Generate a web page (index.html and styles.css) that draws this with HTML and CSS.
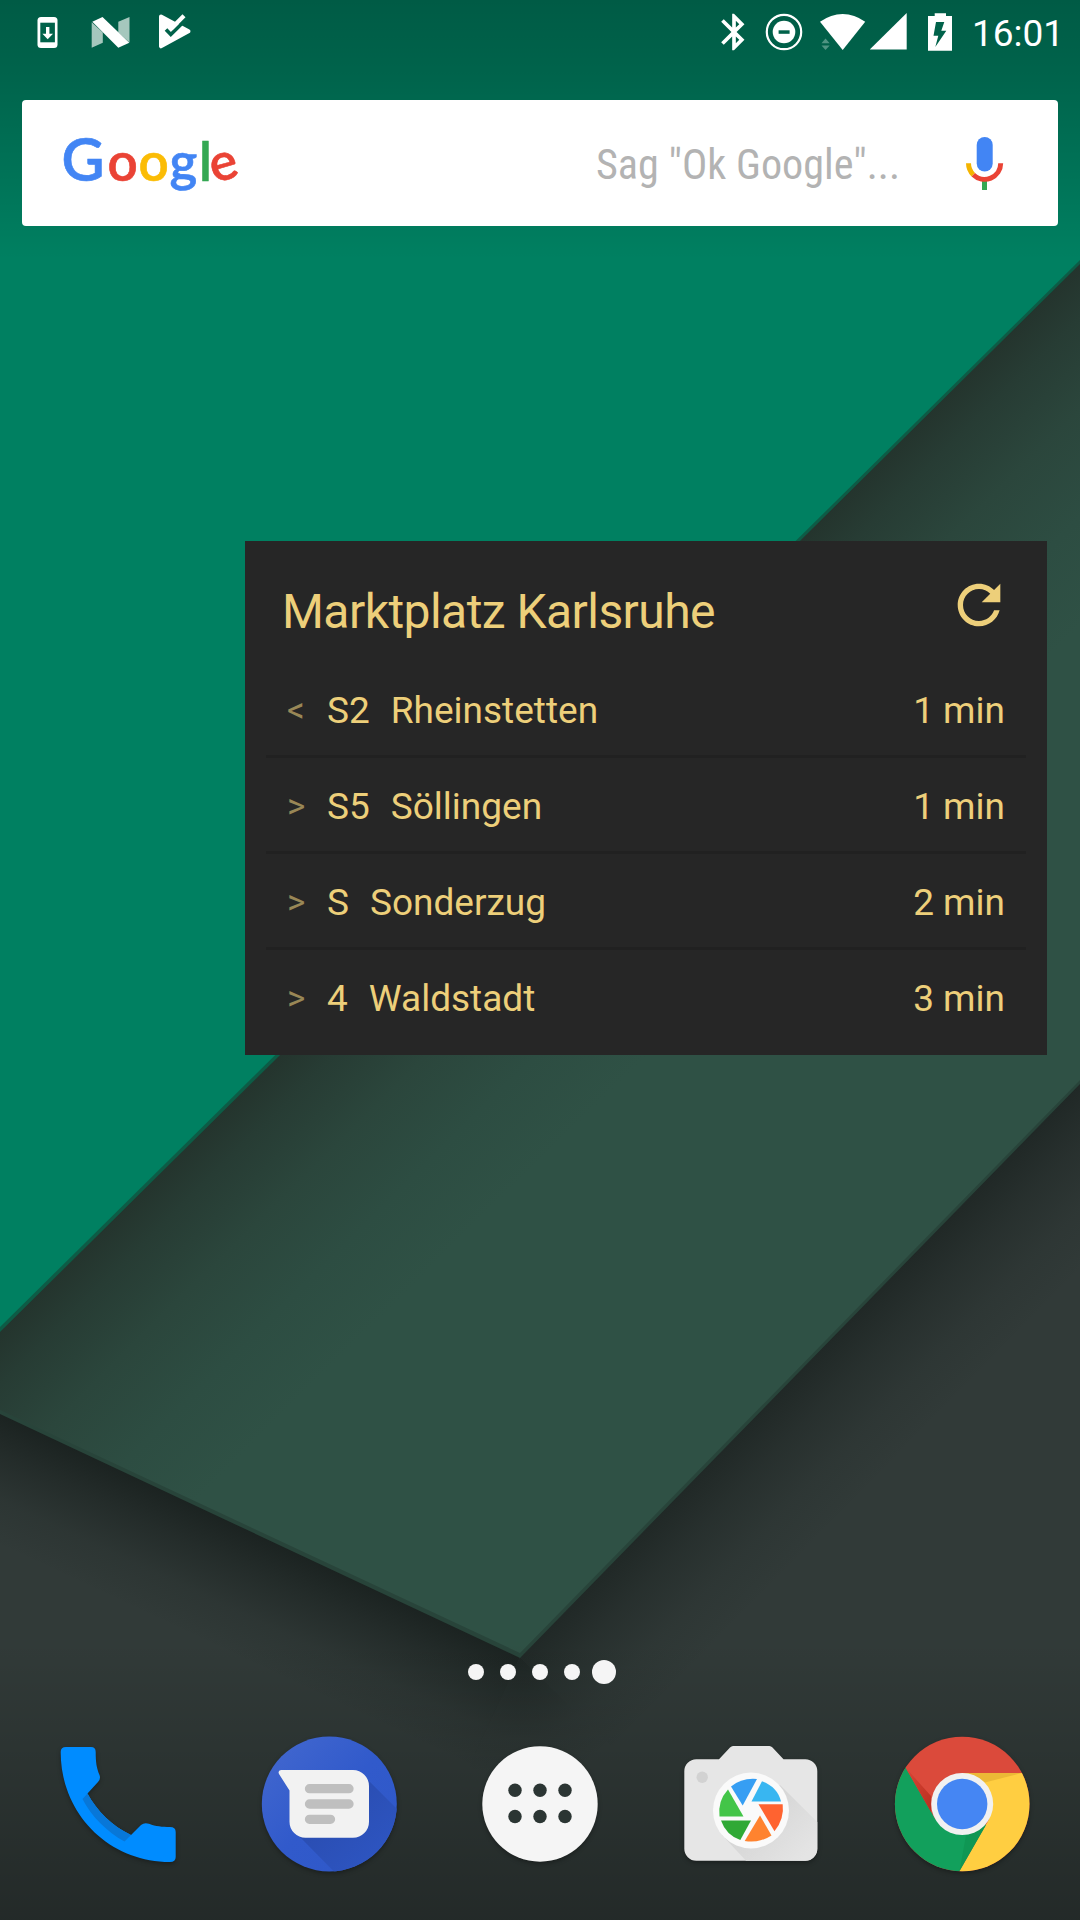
FILE: index.html
```html
<!DOCTYPE html>
<html lang="de">
<head>
<meta charset="utf-8">
<title>Startbildschirm</title>
<link rel="stylesheet" href="styles.css">
</head>
<body>
<svg class="wallpaper" viewBox="0 0 1080 1920" aria-hidden="true">
  <defs>
    <linearGradient id="sheet" gradientUnits="userSpaceOnUse" x1="0" y1="1331" x2="182" y2="1515">
      <stop offset="0" stop-color="#24342d"/><stop offset=".15" stop-color="#273c34"/><stop offset=".4" stop-color="#2b463c"/><stop offset=".7" stop-color="#2d4d42"/><stop offset="1" stop-color="#2f5145"/>
    </linearGradient>
    <linearGradient id="dim" x1="0" y1="0" x2="0" y2="1">
      <stop offset="0" stop-color="#000" stop-opacity=".29"/><stop offset=".3" stop-color="#000" stop-opacity=".22"/><stop offset="1" stop-color="#000" stop-opacity="0"/>
    </linearGradient>
    <linearGradient id="floor" x1="0" y1="0" x2="0" y2="1">
      <stop offset="0" stop-color="#000" stop-opacity="0"/><stop offset="1" stop-color="#000" stop-opacity=".28"/>
    </linearGradient>
    <linearGradient id="shadeLeft" gradientUnits="userSpaceOnUse" x1="520" y1="1657" x2="469" y2="1766">
      <stop offset="0" stop-color="#101715" stop-opacity=".66"/><stop offset=".3" stop-color="#101715" stop-opacity=".4"/><stop offset=".65" stop-color="#101715" stop-opacity=".13"/><stop offset="1" stop-color="#101715" stop-opacity="0"/>
    </linearGradient>
    <linearGradient id="shadeRight" gradientUnits="userSpaceOnUse" x1="520" y1="1657" x2="614" y2="1749">
      <stop offset="0" stop-color="#101715" stop-opacity=".5"/><stop offset=".3" stop-color="#101715" stop-opacity=".29"/><stop offset=".65" stop-color="#101715" stop-opacity=".1"/><stop offset="1" stop-color="#101715" stop-opacity="0"/>
    </linearGradient>
    <radialGradient id="shadeTip" gradientUnits="userSpaceOnUse" cx="520" cy="1657" r="125">
      <stop offset="0" stop-color="#101715" stop-opacity=".58"/><stop offset=".3" stop-color="#101715" stop-opacity=".35"/><stop offset=".65" stop-color="#101715" stop-opacity=".11"/><stop offset="1" stop-color="#101715" stop-opacity="0"/>
    </radialGradient>
  </defs>
  <rect width="1080" height="1920" fill="#313a38"/>
  <path d="M0 1413L520 1657L465 1775L0 1557z" fill="url(#shadeLeft)"/>
  <path d="M520 1657L467 1770L520 1800L618 1753z" fill="url(#shadeTip)"/>
  <path d="M520 1657L1080 1083V1286L618 1753z" fill="url(#shadeRight)"/>
  <path d="M0 1410V1414L520 1658L1080 1084V1079z" fill="#28443a"/>
  <path d="M0 1410L520 1653L1080 1080V200L0 1270z" fill="url(#sheet)"/>
  <path d="M0 0H1080V264L0 1332z" fill="#0d5c46"/>
  <path d="M0 0H1080V260L0 1327z" fill="#008061"/>
  <rect width="1080" height="260" fill="url(#dim)"/>
  <rect y="1640" width="1080" height="280" fill="url(#floor)"/>
</svg>

<div class="home">
  <header class="status">
    <svg class="s-update" width="22" height="33" viewBox="37 15 22 33"><rect x="37.5" y="16" width="20" height="31" rx="3.5" fill="#fff"/><rect x="40.3" y="21.7" width="14.6" height="19.6" fill="#00624a"/><path d="M46 26h3.400v6.700h3.600L47.700 38.200L42.400 32.700H46z" fill="#fff"/></svg>
    <svg class="s-n" width="40" height="33" viewBox="91 15 40 33"><path d="M91.700 21.300V46.700L102.800 41.700V31.500zM118.300 20.700L129.500 16V41.500L118.300 31.500z" fill="#a5c7bd"/><path d="M92.300 20.700L102.500 16L129.300 41.700L118.300 46.700z" fill="#fff"/></svg>
    <svg class="s-play" width="34" height="36" viewBox="158 14 34 36"><path d="M161 16.500L188.500 31.300L161 46.300z" fill="#fff" stroke="#fff" stroke-width="4" stroke-linejoin="round"/><path d="M166 29.500L170.800 34.500L187 18.500" fill="none" stroke="#00624a" stroke-width="3.600"/><path d="M171 28.800L184 15.800" stroke="#fff" stroke-width="4.200"/></svg>
    <span class="spacer"></span>
    <svg class="s-bt" width="44" height="44" viewBox="0 0 24 24"><path fill="#fff" d="M17.710 7.710L12 2h-1v7.590L6.410 5 5 6.410 10.590 12 5 17.590 6.410 19 11 14.410V22h1l5.710-5.710-4.300-4.290 4.300-4.290zM13 5.830l1.880 1.880L13 9.590V5.830zm1.880 10.460L13 18.170v-3.760l1.880 1.880z"/></svg>
    <svg class="s-dnd" width="38" height="38" viewBox="765 13 38 38"><circle cx="784" cy="32" r="17.200" fill="none" stroke="#fff" stroke-width="2.200"/><circle cx="784" cy="32" r="11.300" fill="#fff"/><rect x="778.600" y="30.300" width="11" height="3.500" fill="#00624a"/></svg>
    <svg class="s-wifi" width="46" height="38" viewBox="820 13 46 38"><path d="M820 21.700Q831 13.900 842.700 13.900T865.200 21.700L842.700 50z" fill="#fff"/><path d="M821.500 43.300L825.500 38.500L829.700 43.300zM821.500 45.500H829.700L825.500 50z" fill="#4f9482"/></svg>
    <svg class="s-cell" width="38" height="38" viewBox="870 13 38 38"><path d="M869.700 49.500L906.700 13V49.500z" fill="#fff"/></svg>
    <svg class="s-bat" width="25" height="39" viewBox="928 12 25 39"><path d="M934.700 12.300H946V15H952V49.800H928V15H934.700z" fill="#fff"/><path d="M936 21H944.300L941.300 29.800H946.300L935.300 46L938.300 34.700H933.500z" fill="#00624a"/></svg>
    <span class="clock">16:01</span>
  </header>

  <section class="search">
    <svg class="logo" width="190" height="96" viewBox="50 112 190 96"><g font-family="Lato, sans-serif" font-weight="600" stroke-width=".6"><text y="179.500" font-size="59"><tspan x="61.500" fill="#4285f4" stroke="#4285f4">G</tspan></text><text y="179.500" font-size="53"><tspan x="107.500" fill="#ea4335" stroke="#ea4335">o</tspan><tspan x="138.500" fill="#fbbc05" stroke="#fbbc05">o</tspan><tspan x="169.500" fill="#4285f4" stroke="#4285f4">g</tspan><tspan x="199" fill="#34a853" stroke="#34a853">l</tspan></text><text x="210" y="179" font-size="52" fill="#ea4335" stroke="#ea4335" transform="rotate(-16 224 166)">e</text></g></svg>
    <svg class="hint" width="310" height="60" viewBox="594 135 310 60"><text x="595" y="179.300" textLength="304" lengthAdjust="spacingAndGlyphs">Sag "Ok Google"...</text></svg>
    <svg class="mic" width="40" height="56" viewBox="965 136 40 56"><rect x="976.700" y="137" width="16" height="34.500" rx="8" fill="#4285f4"/><rect x="982" y="181" width="5" height="9" fill="#34a853"/><path d="M968.500 163.300A16.100 16.100 0 0 0 973.300 174.700" fill="none" stroke="#f4b400" stroke-width="5"/><path d="M973.300 174.700A16.100 16.100 0 0 0 1000.700 163.300" fill="none" stroke="#ea4335" stroke-width="5"/></svg>
  </section>

  <section class="widget">
    <div class="head">
      <h1>Marktplatz Karlsruhe</h1>
      <svg class="reload" width="64" height="64" viewBox="0 0 24 24"><path fill="#edcf7a" d="M17.650 6.350C16.200 4.900 14.210 4 12 4c-4.420 0-7.990 3.580-7.990 8s3.570 8 7.990 8c3.730 0 6.840-2.550 7.730-6h-2.080c-.82 2.330-3.040 4-5.650 4-3.310 0-6-2.690-6-6s2.690-6 6-6c1.660 0 3.140.69 4.220 1.780L13 11h7V4l-2.350 2.350z"/></svg>
    </div>
    <div class="row"><span class="dir">&lt;</span><span class="line">S2</span><span class="dest">Rheinstetten</span><span class="time">1 min</span></div>
    <div class="row"><span class="dir">&gt;</span><span class="line">S5</span><span class="dest">Söllingen</span><span class="time">1 min</span></div>
    <div class="row"><span class="dir">&gt;</span><span class="line">S</span><span class="dest">Sonderzug</span><span class="time">2 min</span></div>
    <div class="row"><span class="dir">&gt;</span><span class="line">4</span><span class="dest">Waldstadt</span><span class="time">3 min</span></div>
  </section>

  <div class="pages"><i></i><i></i><i></i><i></i><i class="current"></i></div>

  <nav class="dock">
    <svg viewBox="46 1732 144 144"><path d="M66 1747H91Q95.700 1747 95.700 1752C95.700 1762 96.500 1768 99.500 1775Q101 1779 98 1782L87.500 1793.500C97 1811 112 1826 131 1835L141 1825Q144.500 1822 149 1823.800C156 1826.500 162 1827 170 1827Q175.700 1827 175.700 1832V1857Q175.700 1862 170 1862C109 1862 60.700 1814 60.700 1752Q60.700 1747 66 1747z" fill="#008cff"/><path d="M87.500 1793.500L82.500 1799C91 1816 107 1832 124.500 1841.500L131 1835C112 1826 97 1811 87.500 1793.500z" fill="#0877d8"/></svg>
    <svg viewBox="257 1732 144 144">
      <defs><clipPath id="mc"><circle cx="329.300" cy="1804" r="67.500"/></clipPath><linearGradient id="mg" x1="0" y1="0" x2="1" y2="1"><stop offset="0" stop-color="#4469cf"/><stop offset=".5" stop-color="#315acb"/><stop offset="1" stop-color="#2f58c8"/></linearGradient><linearGradient id="ms" gradientUnits="userSpaceOnUse" x1="330" y1="1800" x2="376" y2="1850"><stop offset="0" stop-color="#2a4db1"/><stop offset="1" stop-color="#2d54bf"/></linearGradient></defs>
      <circle cx="329.300" cy="1804" r="67.500" fill="url(#mg)"/>
      <path d="M364 1776L440 1852L400 1900H362L295 1832z" fill="url(#ms)" clip-path="url(#mc)"/>
      <path d="M281 1770H353A16 16 0 0 1 369 1786V1821.700A16 16 0 0 1 353 1837.700H305.500A16 16 0 0 1 289.500 1821.700V1790.500L279 1774Q277.500 1770.500 281 1770z" fill="#f2f2f2"/>
      <path d="M309.500 1788.700H349M309.500 1804H349M309.500 1819.300H330.500" stroke="#bfbfbf" stroke-width="9.300" stroke-linecap="round"/>
    </svg>
    <svg viewBox="468 1732 144 144"><circle cx="540" cy="1804" r="57.700" fill="#f5f5f5"/><g fill="#2b3533"><circle cx="515" cy="1790.300" r="6.700"/><circle cx="540" cy="1790.300" r="6.700"/><circle cx="565" cy="1790.300" r="6.700"/><circle cx="515" cy="1816.500" r="6.700"/><circle cx="540" cy="1816.500" r="6.700"/><circle cx="565" cy="1816.500" r="6.700"/></g></svg>
    <svg viewBox="679 1732 144 144">
      <defs><linearGradient id="ks" gradientUnits="userSpaceOnUse" x1="755" y1="1815" x2="800" y2="1860"><stop offset="0" stop-color="#d6d6d6"/><stop offset="1" stop-color="#e4e4e4"/></linearGradient></defs>
      <path d="M696.300 1759.300H719L730 1747.500Q731.500 1746 733 1746H769.500Q771 1746 772.500 1747.500L783.500 1759.300H805.300A12 12 0 0 1 817.300 1771.300V1848.700A12 12 0 0 1 805.300 1860.700H696.300A12 12 0 0 1 684.300 1848.700V1771.300A12 12 0 0 1 696.300 1759.300z" fill="#e6e6e6"/>
      <path d="M780 1785L817.300 1822V1848.700A12 12 0 0 1 805.300 1860.700H746L722 1835z" fill="url(#ks)"/>
      <circle cx="702.200" cy="1777.300" r="5.700" fill="#d2d2d2"/><circle cx="751" cy="1810.500" r="38" fill="#fafafa"/>
      <path fill="#369ef3" d="M731 1786.500Q742 1777.500 757 1779L742.700 1805.500z"/>
      <path fill="#38b6f1" d="M762 1781.300Q777.500 1787 781 1801.500H751.500z"/>
      <path fill="#ff6330" d="M758.500 1804.300H782.700Q784.500 1819 774.500 1831.300z"/>
      <path fill="#ff832f" d="M760 1815.500L771.500 1835.500Q759 1843.500 744.700 1841z"/>
      <path fill="#30a936" d="M721 1820.500H751L740.300 1840Q726 1835 721 1820.500z"/>
      <path fill="#43c548" d="M728 1789.500L743.500 1816.500H719.500Q717.500 1801 728 1789.500z"/>
    </svg>
    <svg viewBox="890 1732 144 144">
      <defs><clipPath id="cc"><circle cx="962.200" cy="1804" r="67.300"/></clipPath>
      <linearGradient id="cs" x1="0" y1="0" x2="1" y2="1"><stop offset="0" stop-color="#db4437"/><stop offset="1" stop-color="#b8301f"/></linearGradient></defs>
      <g clip-path="url(#cc)"><rect x="890" y="1732" width="144" height="144" fill="#db4a3b"/>
      <path d="M905.500 1767.500L935.500 1819.500L962 1804L986 1825L959 1872L880 1880V1725z" fill="#12a05c"/>
      <path d="M962 1773H1035V1880H954.500L989 1819.500z" fill="#ffce41"/>
      <path d="M962 1773H1022L983 1783z" fill="#ecb936"/>
      <path d="M905.500 1767.500L931 1796V1812z" fill="url(#cs)"/><path d="M986 1825L966 1835L959.500 1871z" fill="#0f9754"/></g>
      <circle cx="962.200" cy="1804" r="31" fill="#f1f1f1"/><circle cx="962.200" cy="1804" r="25.200" fill="#4586f3"/>
    </svg>
  </nav>
</div>
</body>
</html>
```
FILE: styles.css
```css
* { box-sizing: border-box; }
body { margin: 0; background: #313a38; font-family: Roboto, "Noto Sans", sans-serif; }
svg { display: block; flex: none; }

.wallpaper { position: absolute; top: 0; left: 0; width: 1080px; height: 1920px; }
.home { position: relative; width: 1080px; height: 1920px; display: flex; flex-direction: column; overflow: hidden; }

.status { height: 72px; padding: 0 21px 8px 37px; display: flex; align-items: center; }
.s-update { margin-right: 32px; }
.s-n { margin-right: 27px; }
.spacer { flex: 1; }
.s-bt { margin-right: 9px; }
.s-dnd { margin-right: 17px; }
.s-wifi { margin-right: 4px; }
.s-cell { margin-right: 20px; }
.s-bat { margin-right: 19px; }
.clock { width: 87px; padding-top: 3px; color: #fff; font-size: 37px; line-height: 44px; white-space: nowrap; }

.search { height: 126px; margin: 28px 22px 0; padding: 0 53px 0 28px; background: #fff; border-radius: 4px; display: flex; align-items: center; }
.logo { margin-top: -5px; overflow: visible; }
.hint { margin-left: auto; margin-right: 60px; margin-top: 4px; }
.hint text { font: 42px "Roboto Condensed", Roboto, sans-serif; fill: #b3b3b3; }
.mic { margin-top: 2px; }

.widget { width: 802px; height: 514px; margin: 315px 0 0 245px; padding: 0 21px; background: #262626; color: #edcf7a; }
.head { height: 121px; padding: 0 15px 0 16px; display: flex; justify-content: space-between; }
h1 { margin: 43px 0 0; font-size: 48px; line-height: 56px; font-weight: 400; letter-spacing: -.55px; white-space: nowrap; }
.reload { margin-top: 32px; }
.row { height: 96px; padding: 3px 21px 0 21px; display: flex; align-items: center; font-size: 37px; white-space: pre; border-bottom: 3px solid #212121; }
.row:last-child { border-bottom-color: transparent; }
.dir { width: 40px; font-size: 35px; color: #998756; }
.line { margin-right: 21px; }
.time { margin-left: auto; }

.pages { height: 24px; margin: 605px 0 0 468px; display: flex; align-items: center; gap: 16px; }
.pages i { width: 16px; height: 16px; border-radius: 50%; background: #f5f5f5; }
.pages .current { width: 24px; height: 24px; margin-left: -4px; }

.dock { margin: 48px 12.500px 0; display: grid; grid-template-columns: repeat(5, 1fr); justify-items: center; }
.dock svg { width: 144px; height: 144px; filter: drop-shadow(0 2px 2px rgba(0, 0, 0, .3)); }
```
